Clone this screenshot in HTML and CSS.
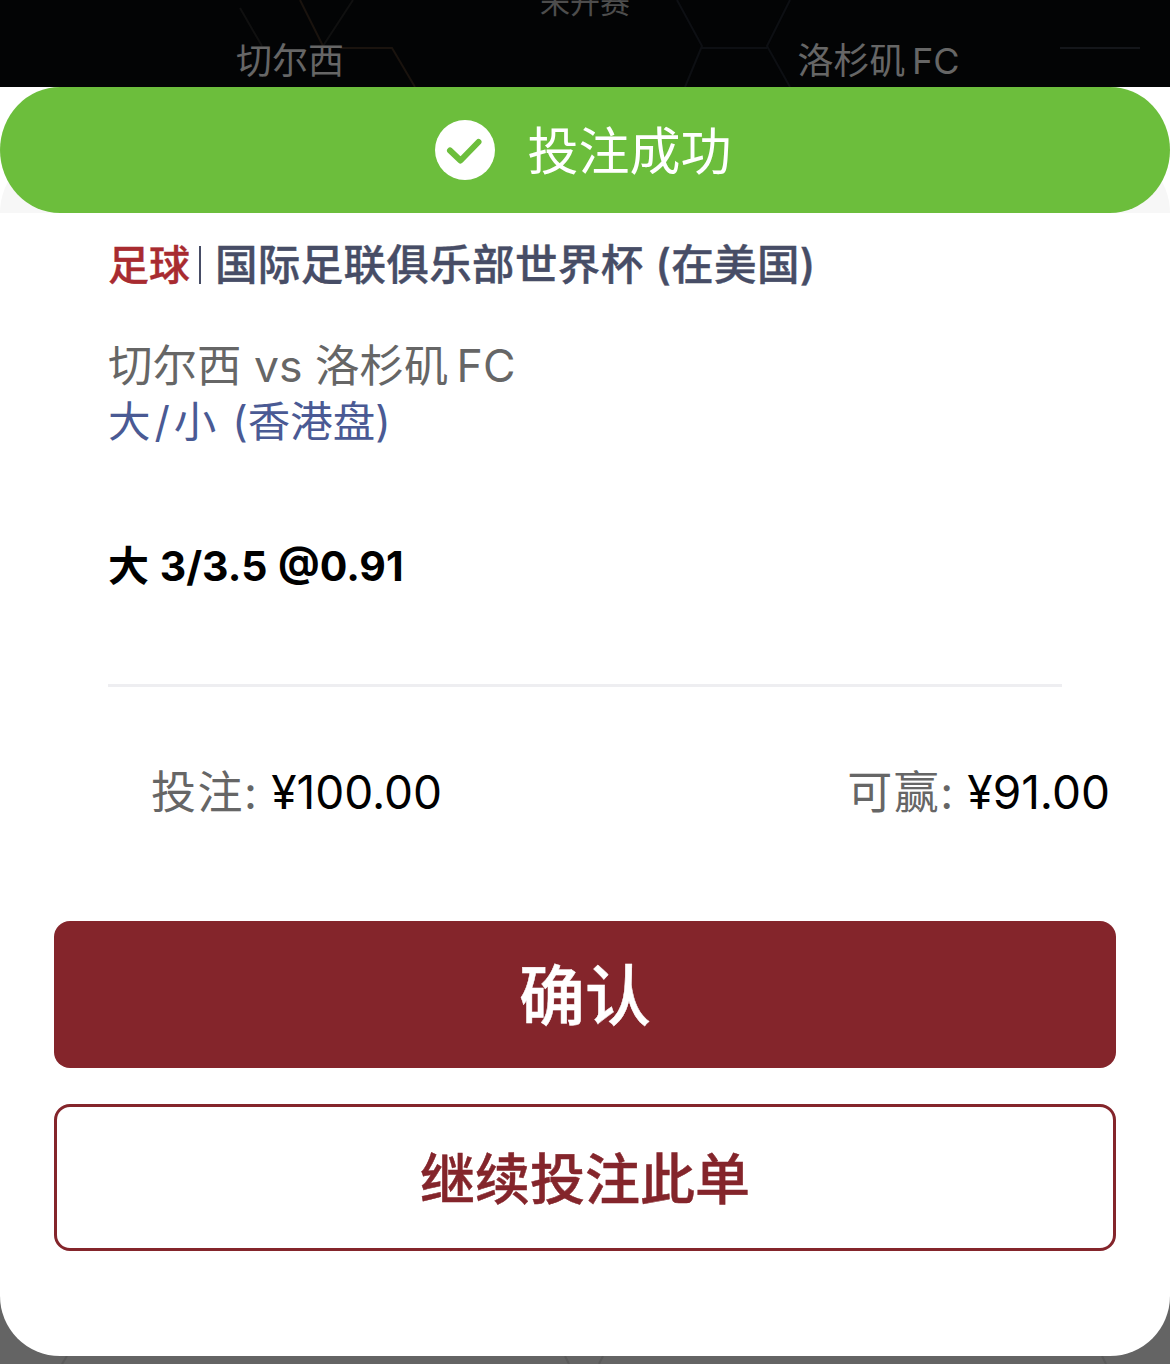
FILE: index.html
```html
<!DOCTYPE html>
<html lang="zh-CN">
<head>
    <meta charset="UTF-8">
    <meta name="viewport" content="width=device-width, initial-scale=1.0">
    <link rel="stylesheet" href="styles.css">
</head>
<body>
    <div class="match-bar">
        <svg class="match-lines" viewBox="0 0 1170 90" width="1170" height="90">
            <path d="M240 8 L262 46 M353 0 L323 46" fill="none" stroke="#101010" stroke-width="2"/>
            <path d="M300 0 L323 46 M340 48 L392 48 L415 87" fill="none" stroke="#1a130e" stroke-width="2"/>
            <path d="M677 0 L702 46 L685 87 M790 0 L767 46 L790 87 M702 48 L767 48" fill="none" stroke="#0d0f13" stroke-width="2"/>
            <path d="M1060 48 L1140 48" fill="none" stroke="#14161a" stroke-width="2"/>
        </svg>
        <div class="match-status">未开赛</div>
        <div class="match-teams">
            <span class="team team-home">切尔西</span>
            <span class="team team-away">洛杉矶&#8201;FC</span>
        </div>
    </div>

    <div class="sheet">
        <div class="banner">
            <svg class="banner-icon" viewBox="0 0 60 60" width="60" height="60">
                <circle cx="30" cy="30" r="30" fill="#fff"/>
                <path d="M15 30.500 L25.500 40.500 L43.500 22" fill="none" stroke="#6cbe3c" stroke-width="6" stroke-linecap="round" stroke-linejoin="round"/>
            </svg>
            <span class="banner-text">投注成功</span>
        </div>

        <div class="sheet-body">
            <div class="league"><span class="sport">足球</span><span class="league-sep"></span><span>国际足联俱乐部世界杯 (在美国)</span></div>
            <div class="fixture">切尔西 vs 洛杉矶&#8201;FC</div>
            <div class="market"><span class="market-type">大/小</span> (香港盘)</div>
            <div class="selection">大 3/3.5 @0.91</div>
            <div class="divider"></div>
            <div class="amounts">
                <div class="amount"><span class="amount-label">投注:</span> <span class="amount-value">¥100.00</span></div>
                <div class="amount"><span class="amount-label">可赢:</span> <span class="amount-value">¥91.00</span></div>
            </div>
            <button class="btn btn-confirm">确认</button>
            <button class="btn btn-again">继续投注此单</button>
        </div>
    </div>

    <svg class="bottom-lines" viewBox="0 0 1170 8" width="1170" height="8">
        <path d="M67 0 L62 8 M565 0 L569 8 M603 0 L599 8 M1102 0 L1106 8" fill="none" stroke="#5a5a5a" stroke-width="2"/>
    </svg>
</body>
</html>
```

FILE: styles.css
```css
* {
  box-sizing: border-box;
}
html, body {
  margin: 0;
  padding: 0;
}
body {
  height: 1364px;
  overflow: hidden;
  background-color: #646464;
  font-family: Inter, "Noto Sans CJK SC", sans-serif;
}
.match-bar {
  position: relative;
  height: 150px;
  margin-bottom: -63px;
  overflow: hidden;
  background-color: #030405;
  color: #666;
  text-align: center;
}
.match-lines {
  position: absolute;
  top: 0;
  left: 0;
}
.match-status {
  position: relative;
  height: 34px;
  margin-top: -15px;
  font-size: 30px;
  line-height: 34px;
  color: #4d4d4d;
}
.match-teams {
  position: relative;
  display: flex;
  padding-top: 20px;
}
.team {
  font-size: 36px;
  line-height: 44px;
}
.team-home {
  width: 580px;
}
.team-away {
  width: 590px;
  padding-left: 7px;
}
.sheet {
  position: relative;
  height: 1269px;
  background-color: #fff;
  border-radius: 0 0 60px 60px;
}
.banner {
  display: flex;
  align-items: center;
  justify-content: center;
  gap: 32px;
  height: 126px;
  padding-right: 3px;
  background-color: #6cbe3c;
  border-radius: 60px / 63px;
  box-shadow: 0 63px 0 0 #f7f7f7;
  color: #fff;
}
.banner-text {
  padding-top: 4px;
  font-size: 51px;
  line-height: 60px;
}
.sheet-body {
  position: relative;
  background-color: #fff;
  padding: 0 54px;
}
.league {
  display: flex;
  align-items: center;
  padding: 26px 0 0 54px;
  font-size: 42.500px;
  line-height: 52px;
  font-weight: 500;
  letter-spacing: 0.350px;
  -webkit-text-stroke: 0.400px #474d66;
  color: #474d66;
}
.sport {
  font-size: 41px;
  font-weight: 500;
  letter-spacing: 0;
  -webkit-text-stroke: 0.400px #a82b30;
  color: #a82b30;
}
.league-sep {
  width: 2px;
  height: 38px;
  margin: 0 14px 0 9px;
  background-color: #474d66;
}
.fixture {
  padding: 47px 0 0 54px;
  font-size: 44.500px;
  line-height: 56px;
  color: #666;
}
.market {
  padding-left: 54px;
  font-size: 42.500px;
  line-height: 55px;
  color: #4a5a94;
}
.market-type {
  letter-spacing: 4px;
}
.selection {
  padding: 90px 0 0 54px;
  font-size: 41px;
  line-height: 55px;
  font-weight: bold;
  word-spacing: 1px;
  color: #000;
}
.divider {
  height: 3px;
  margin: 90px 0 0 54px;
  width: 954px;
  background-color: #eeeef1;
}
.amounts {
  display: flex;
  justify-content: space-between;
  padding: 76px 6px 0 97px;
  font-size: 45px;
  line-height: 58px;
}
.amount-label {
  letter-spacing: 1.500px;
  color: #666;
}
.amount-value {
  font-size: 46px;
  color: #000;
}
.btn {
  display: block;
  width: 100%;
  font-family: inherit;
  text-align: center;
  border-radius: 16px;
  cursor: pointer;
}
.btn-confirm {
  height: 147px;
  margin-top: 99px;
  padding-bottom: 8px;
  border: none;
  background-color: #84252b;
  color: #fff;
  font-size: 66px;
  font-weight: 500;
  -webkit-text-stroke: 0.500px #fff;
}
.btn-again {
  height: 147px;
  margin-top: 36px;
  padding-bottom: 6px;
  border: 3px solid #84252b;
  background-color: #fff;
  color: #84252b;
  font-size: 55px;
  font-weight: 500;
  -webkit-text-stroke: 0.500px #84252b;
}
.bottom-lines {
  display: block;
}
```
